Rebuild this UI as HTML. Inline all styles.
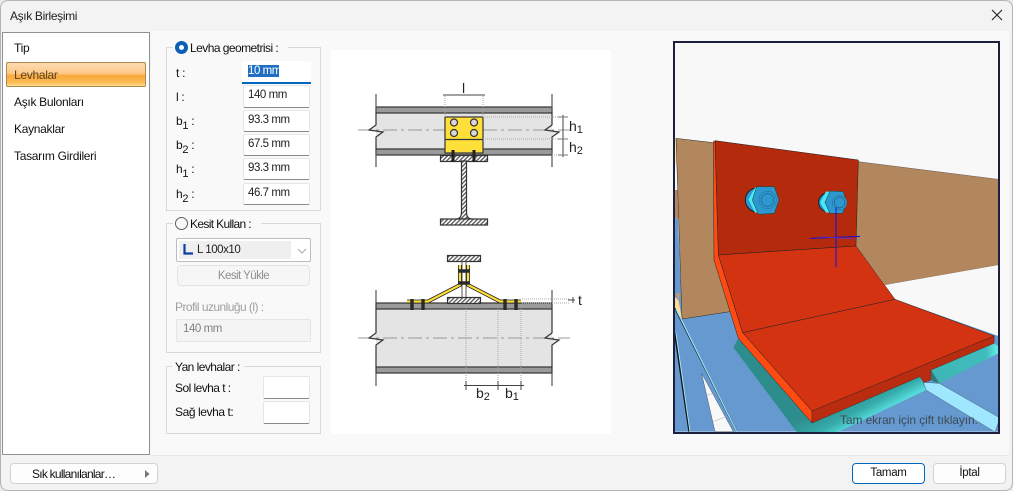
<!DOCTYPE html>
<html><head><meta charset="utf-8"><style>
html,body{margin:0;padding:0;background:#e9e9e9;}
body{width:1013px;height:491px;overflow:hidden;position:relative;font:12px "Liberation Sans",sans-serif;color:#111;}
div{position:absolute;box-sizing:border-box;}
.t{white-space:nowrap;line-height:14px;letter-spacing:-.3px;}
.s{letter-spacing:-.55px;}
.i{background:#fff;border:1px solid #e6e6e6;border-bottom:1px solid #8a8a8a;border-radius:2px;}
.v{white-space:nowrap;line-height:14px;font-size:11.5px;color:#222;letter-spacing:-.45px;}
.g{border:1px solid #d9d9d9;}
sub{font-size:11px;line-height:0;vertical-align:-4px;}
.btn{background:#fdfdfd;border:1px solid #d2d2d2;border-radius:4px;text-align:center;line-height:19px;font-size:11.5px;letter-spacing:-.3px;}
</style></head><body>
<div style="left:0;top:0;width:1013px;height:491px;background:#f3f3f3;border:1px solid #b4b4b4;border-radius:8px;"></div>
<div class="t" style="left:10px;top:9px;font-size:12px;color:#222;letter-spacing:-.35px;">Aşık Birleşimi</div>
<svg style="position:absolute;left:991px;top:9px" width="12" height="12"><path d="M1 1L11 11M11 1L1 11" stroke="#222" stroke-width="1.1" fill="none"/></svg>
<div style="left:151px;top:31px;width:858px;height:424px;background:#f9f9f9;"></div>
<div style="left:151px;top:455px;width:858px;height:1px;background:#e6e6e6;"></div>
<div style="left:2px;top:32px;width:148px;height:423px;background:#fff;border:1px solid #8d9296;"></div>
<div class="t" style="left:14px;top:41px;">Tip</div>
<div style="left:6px;top:62px;width:140px;height:25px;border:1px solid #b0894f;border-radius:2px;background:linear-gradient(#fddcb0 0%,#fcc88a 45%,#f8a93a 55%,#fbbd56 85%,#fddc90 100%);"></div>
<div class="t" style="left:14px;top:68px;color:#5d4320;">Levhalar</div>
<div class="t" style="left:14px;top:95px;">Aşık Bulonları</div>
<div class="t" style="left:14px;top:122px;">Kaynaklar</div>
<div class="t" style="left:14px;top:149px;">Tasarım Girdileri</div>

<div class="g" style="left:166px;top:47px;width:155px;height:164px;"></div>
<div style="left:173px;top:40px;width:115px;height:14px;background:#f9f9f9;"></div>
<div style="left:175px;top:41px;width:13px;height:13px;border-radius:50%;background:#fff;border:4px solid #0b5fb5;"></div>
<div class="t s" style="left:190px;top:41px;">Levha geometrisi :</div>
<div class="t" style="left:176px;top:66px;">t :</div>
<div class="t" style="left:176px;top:90px;">l :</div>
<div class="t" style="left:176px;top:114px;">b<sub>1</sub> :</div>
<div class="t" style="left:176px;top:138px;">b<sub>2</sub> :</div>
<div class="t" style="left:176px;top:162px;">h<sub>1</sub> :</div>
<div class="t" style="left:176px;top:187px;">h<sub>2</sub> :</div>
<div style="left:242px;top:61px;width:69px;height:23px;background:#fff;border-bottom:2px solid #0067c0;"></div>
<div style="left:248px;top:65px;width:31px;height:12px;background:#1f6fc4;"></div>
<div class="v" style="left:248px;top:64px;color:#fff;">10 mm</div>
<div class="i" style="left:243px;top:85px;width:67px;height:23px;"></div><div class="v" style="left:248px;top:88px;">140 mm</div>
<div class="i" style="left:243px;top:110px;width:67px;height:22px;"></div><div class="v" style="left:248px;top:113px;">93.3 mm</div>
<div class="i" style="left:243px;top:134px;width:67px;height:22px;"></div><div class="v" style="left:248px;top:137px;">67.5 mm</div>
<div class="i" style="left:243px;top:158px;width:67px;height:22px;"></div><div class="v" style="left:248px;top:161px;">93.3 mm</div>
<div class="i" style="left:243px;top:183px;width:67px;height:22px;"></div><div class="v" style="left:248px;top:186px;">46.7 mm</div>

<div class="g" style="left:166px;top:223px;width:155px;height:130px;"></div>
<div style="left:173px;top:216px;width:88px;height:14px;background:#f9f9f9;"></div>
<div style="left:175px;top:217px;width:13px;height:13px;border-radius:50%;background:#f9f9f9;border:1px solid #5f5f5f;"></div>
<div class="t" style="left:190px;top:217px;letter-spacing:-.65px;">Kesit Kullan :</div>
<div style="left:176px;top:238px;width:135px;height:24px;background:#fff;border:1px solid #bdbdbd;border-radius:2px;"></div>
<div style="left:179px;top:241px;width:112px;height:18px;background:#efefef;"></div>
<svg style="position:absolute;left:183px;top:244px" width="12" height="11"><path d="M1.5 0V9.5H10" stroke="#0b3ea8" stroke-width="2.2" fill="none"/></svg>
<div class="v" style="left:197px;top:243px;">L 100x10</div>
<svg style="position:absolute;left:297px;top:248px" width="10" height="6"><path d="M1 1L5 5L9 1" stroke="#a8a8a8" stroke-width="1" fill="none"/></svg>
<div class="btn" style="left:177px;top:265px;width:133px;height:21px;background:#f6f6f6;border-color:#e4e4e4;color:#8e8e8e;line-height:20px;letter-spacing:-.55px;">Kesit Yükle</div>
<div class="t s" style="left:175px;top:300px;color:#a0a0a0;">Profil uzunluğu (l) :</div>
<div style="left:176px;top:319px;width:135px;height:23px;background:#f4f4f4;border:1px solid #e5e5e5;border-radius:2px;"></div>
<div class="v" style="left:183px;top:322px;color:#808080;">140 mm</div>

<div class="g" style="left:166px;top:366px;width:155px;height:68px;"></div>
<div style="left:172px;top:360px;width:72px;height:14px;background:#f9f9f9;"></div>
<div class="t s" style="left:175px;top:360px;">Yan levhalar :</div>
<div class="t s" style="left:175px;top:381px;">Sol levha t :</div>
<div class="t" style="left:175px;top:405px;letter-spacing:-.42px;">Sağ levha t:</div>
<div class="i" style="left:263px;top:376px;width:47px;height:23px;"></div>
<div class="i" style="left:263px;top:401px;width:47px;height:23px;"></div>

<div style="left:331px;top:50px;width:280px;height:384px;background:#fff;"></div>
<svg style="position:absolute;left:331px;top:50px" width="280" height="384" viewBox="331 50 280 384" font-family="Liberation Sans,sans-serif">
<defs><pattern id="h" width="3" height="3" patternUnits="userSpaceOnUse" patternTransform="rotate(-45)"><rect width="3" height="3" fill="#fff"/><rect width="3" height="1.3" fill="#555"/></pattern></defs>
<!-- upper -->
<rect x="376" y="113" width="176" height="36" fill="#e4e4e4"/>
<rect x="376" y="107" width="176" height="6" fill="#9a9a9a" stroke="#333" stroke-width="1.2"/>
<rect x="376" y="149" width="176" height="6" fill="#9a9a9a" stroke="#333" stroke-width="1.2"/>
<path d="M376 94V112M376 150V167M552 94V112M552 150V167" stroke="#555" stroke-width="1.2" fill="none"/>
<path d="M358 130H445M483 130H570" stroke="#999" stroke-width="1" stroke-dasharray="14 4 3 4" fill="none"/>
<path d="M376 113V125L369 130L383 132L376 137V149M552 113V125L545 130L559 132L552 137V149" stroke="#333" stroke-width="1.200" fill="#e4e4e4"/>
<rect x="445" y="117" width="38" height="36" fill="#ffdf3a" stroke="#333" stroke-width="1.200"/>
<path d="M445 139.500H483" stroke="#333" stroke-width="1.200"/>
<g fill="#d8d8d8" stroke="#333" stroke-width="1.200"><circle cx="454" cy="122.500" r="3.500"/><circle cx="474" cy="122.500" r="3.500"/><circle cx="454" cy="133" r="3.500"/><circle cx="474" cy="133" r="3.500"/></g>
<path d="M445 96V117M483 96V117M483 117H563M483 139H563M552 155H563" stroke="#aaa" stroke-width="1" stroke-dasharray="1 1" fill="none"/>
<path d="M443 95H485" stroke="#444" stroke-width="1"/>
<path d="M563 115V157" stroke="#444" stroke-width="1"/>
<path d="M558 117H568M558 139H568M558 155H568" stroke="#777" stroke-width="1"/>
<text x="462" y="93" font-size="14" fill="#222">l</text>
<text x="569" y="131" font-size="14" fill="#222">h<tspan font-size="11" dy="2">1</tspan></text>
<text x="569" y="152" font-size="14" fill="#222">h<tspan font-size="11" dy="2">2</tspan></text>
<rect x="440.500" y="155.500" width="47" height="6" fill="url(#h)" stroke="#333" stroke-width="1.200"/>
<path d="M461.500 161V212Q461.500 219 456 219H472Q466.500 219 466.500 212V161Z" fill="url(#h)" stroke="#333" stroke-width="1.200"/>
<rect x="440.500" y="219" width="47" height="6" fill="url(#h)" stroke="#333" stroke-width="1.200"/>
<path d="M453 150V162M474 150V162" stroke="#222" stroke-width="3"/>
<!-- lower -->
<rect x="376" y="309" width="176" height="58" fill="#e4e4e4"/>
<rect x="376" y="303" width="176" height="6" fill="#9a9a9a" stroke="#333" stroke-width="1.200"/>
<rect x="376" y="367" width="176" height="6" fill="#9a9a9a" stroke="#333" stroke-width="1.200"/>
<path d="M376 290V303M376 373V386M552 290V303M552 373V386" stroke="#555" stroke-width="1.200" fill="none"/>
<path d="M358 338H570" stroke="#999" stroke-width="1" stroke-dasharray="14 4 3 4" fill="none"/>
<path d="M376 309V333L369 338L383 340L376 345V367M552 309V333L545 338L559 340L552 345V367" stroke="#333" stroke-width="1.200" fill="#e4e4e4"/>
<rect x="447.500" y="255.500" width="33" height="6" fill="url(#h)" stroke="#333" stroke-width="1.200"/>
<rect x="447.500" y="297.500" width="33" height="6" fill="url(#h)" stroke="#333" stroke-width="1.200"/>
<path d="M462 261V297M466 261V297" stroke="#555" stroke-width="1"/>
<g fill="none" stroke="#222" stroke-width="3.800"><path d="M407 301.500H428L460 285V265"/><path d="M521 301.500H500L468 285V265"/></g>
<g fill="none" stroke="#ffdf3a" stroke-width="2.200"><path d="M407 301.500H428L460 285V265"/><path d="M521 301.500H500L468 285V265"/></g>
<path d="M458 271H470M458 283H470M412 299V310M423 299V310M505 299V310M516 299V310" stroke="#2a2a2a" stroke-width="3.400"/>
<path d="M466 305V384M498 305V384M521 305V384M522 299H570M522 303H570" stroke="#aaa" stroke-width="1" stroke-dasharray="1 1" fill="none"/>
<path d="M464 385.500H524M466 381V390M498 381V390M521 381V390M573 297V303M568 300H575" stroke="#444" stroke-width="1" fill="none"/>
<text x="578" y="305" font-size="14" fill="#222">t</text>
<text x="476" y="398" font-size="14" fill="#222">b<tspan font-size="11" dy="2">2</tspan></text>
<text x="505" y="398" font-size="14" fill="#222">b<tspan font-size="11" dy="2">1</tspan></text>
</svg>

<div style="left:673px;top:41px;width:327px;height:393px;background:#f8f8f8;"></div>
<svg style="position:absolute;left:670px;top:120px" width="343" height="320" viewBox="0 0 1029 960">
<defs>
<linearGradient id="tg" gradientUnits="userSpaceOnUse" x1="480" y1="850" x2="530" y2="945"><stop offset="0" stop-color="#2d8c8c"/><stop offset="0.55" stop-color="#36aaaa"/><stop offset="1" stop-color="#5ff0ec"/></linearGradient>
<linearGradient id="tr" gradientUnits="userSpaceOnUse" x1="800" y1="0" x2="985" y2="0"><stop offset="0" stop-color="#3fb6b6"/><stop offset="0.8" stop-color="#40bcbc"/><stop offset="1" stop-color="#66f0ea"/></linearGradient>
</defs>
<rect x="12" y="540" width="973" height="395" fill="#6699d0"/>
<polygon points="12,295 24,295 36,595 12,560" fill="#6699d0"/>
<polygon points="12,55 20,55 24,130 12,130" fill="#ffe6a8"/>
<polygon points="12,210 22,210 26,295 12,295" fill="#b3875d"/>
<polygon points="18,55 130,68 132,420 180,575 36,597" fill="#b3875d"/>
<path d="M130 68L18 55L36 597L180 575" stroke="#2a2a2a" stroke-width="1.500" fill="none"/>
<polygon points="565,125 985,178 985,435 645,495 558,378" fill="#b3875d"/>
<path d="M565 125L985 178M985 435L645 495" stroke="#2a2a2a" stroke-width="1" fill="none"/>
<polygon points="645,495 985,435 985,648 675,538" fill="#f8f8f8"/>
<polygon points="15,520 30,520 26,542" fill="#c79a6e"/>
<polygon points="14,530 26,542 36,597 14,565" fill="#ffdc90"/>
<path d="M15 565L200 935" stroke="#1d2a3a" stroke-width="5" fill="none"/>
<path d="M18 567L200 935" stroke="#a0e6fa" stroke-width="3.500" fill="none"/>
<path d="M15 640L58 935" stroke="#111" stroke-width="6" fill="none"/>
<path d="M18 640L60 935" stroke="#a0e6fa" stroke-width="3" fill="none"/>
<polygon points="95,760 135,935 190,935" fill="#f8f8f8" stroke="#1d2a3a" stroke-width="1"/>
<path d="M112 825L137 818M130 905L168 890" stroke="#aaa" stroke-width="1.500"/>
<polygon points="205,655 190,682 380,936 504,936 768,810 750,770 430,905" fill="url(#tg)"/>
<polygon points="783,750 972,670 985,680 985,700 808,790" fill="url(#tr)"/>
<polygon points="783,750 808,790 785,782" fill="#2a7a7a"/>
<polygon points="760,787 808,790 990,894 975,936 768,810" fill="#9fe6ff" stroke="#2a3a4a" stroke-width="1"/>
<polygon points="135,62 565,120 558,378 145,405" fill="#b32a0d" stroke="#1a1a1a" stroke-width="1.500"/>
<polygon points="130,65 135,62 145,405 218,638 426,873 426,909 205,655 132,420" fill="#ff4a12" stroke="#222" stroke-width="1.500"/>
<polygon points="145,405 558,378 675,538 218,638" fill="#d43312" stroke="#222" stroke-width="1.500"/>
<polygon points="218,638 675,538 973,648 426,873" fill="#d43312" stroke="#222" stroke-width="1.500"/>
<polygon points="426,873 973,648 972,670 783,750 783,780 762,788 750,770 426,909" fill="#ba2c10" stroke="#222" stroke-width="1"/>
<circle cx="262" cy="240" r="36" fill="#2d97cf" stroke="#14222e" stroke-width="3"/>
<polygon points="255,203 235,238 255,278 268,278 250,240 268,203" fill="#48e8f8"/>
<polygon points="260,200 313,200 327,240 313,280 265,283 247,240" fill="#2d97cf" stroke="#143" stroke-width="1.500"/>
<circle cx="293" cy="240" r="26" fill="#2d97cf" stroke="#1a5070" stroke-width="1"/>
<circle cx="293" cy="240" r="19" fill="#2d97cf" stroke="#1a4060" stroke-width="1.500"/>
<circle cx="474" cy="247" r="28" fill="#2d97cf" stroke="#14222e" stroke-width="3"/>
<polygon points="468,215 450,247 468,278 478,278 464,247 480,215" fill="#48e8f8"/>
<polygon points="480,213 520,215 530,247 518,280 480,280 465,247" fill="#2d97cf" stroke="#143" stroke-width="1.500"/>
<circle cx="509" cy="248" r="22" fill="#2d97cf" stroke="#1a5070" stroke-width="1"/>
<circle cx="509" cy="248" r="16" fill="#2d97cf" stroke="#1a4060" stroke-width="1.500"/>
<path d="M498 262V442M420 355L570 349" stroke="#1010e0" stroke-width="3" fill="none"/>
<path d="M450 350L558 358" stroke="#7030d0" stroke-width="2" fill="none"/>
</svg>
<div style="left:673px;top:41px;width:327px;height:393px;border:2px solid #1c1f3e;"></div>
<div class="t" style="left:840px;top:413px;color:#3d4a55;font-size:12px;letter-spacing:-.1px;">Tam ekran için çift tıklayın.</div>

<div class="btn" style="left:10px;top:463px;width:148px;height:21px;"></div>
<div class="t" style="left:32px;top:467px;letter-spacing:-.75px;">Sık kullanılanlar…</div>
<svg style="position:absolute;left:145px;top:470px" width="6" height="8"><path d="M0 0L4.500 4L0 8Z" fill="#777"/></svg>
<div class="btn" style="left:852px;top:463px;width:73px;height:21px;border:1.500px solid #0067c0;background:#fff;">Tamam</div>
<div class="btn" style="left:933px;top:463px;width:73px;height:21px;">İptal</div>
</body></html>
